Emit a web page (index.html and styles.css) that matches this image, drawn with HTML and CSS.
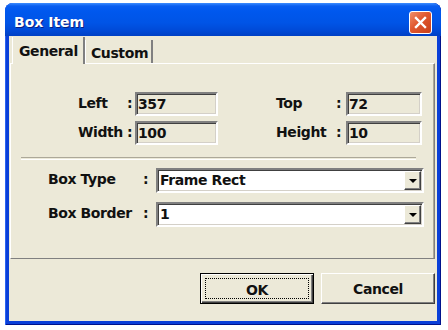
FILE: index.html
```html
<!DOCTYPE html>
<html lang="en">
<head>
  <meta charset="UTF-8" />
  <title>Box Item</title>
  <link rel="stylesheet" href="styles.css">
</head>
<body>
  <div class="window">
    <div class="titlebar">
      <span class="title">Box Item</span>
      <span class="close">
        <svg width="13" height="13" viewBox="0 0 13 13">
          <path d="M2 2 L11 11 M11 2 L2 11" stroke="#fff" stroke-width="2.4" stroke-linecap="square" fill="none"/>
        </svg>
      </span>
    </div>
    <div class="client">
      <div class="tabs">
        <div class="tab active">General</div>
        <div class="tab">Custom</div>
      </div>
      <div class="panel">
        <div class="pos-grid">
          <span class="lbl">Left</span><span class="colon">:</span><span class="edit">357</span>
          <span></span>
          <span class="lbl">Top</span><span class="colon">:</span><span class="edit">72</span>
          <span class="lbl">Width</span><span class="colon">:</span><span class="edit">100</span>
          <span></span>
          <span class="lbl">Height</span><span class="colon">:</span><span class="edit">10</span>
        </div>
        <div class="sep"></div>
        <div class="combo-grid">
          <span class="lbl">Box Type</span><span class="colon">:</span>
          <div class="combo"><span class="value">Frame Rect</span><span class="drop"></span></div>
          <span class="lbl">Box Border</span><span class="colon">:</span>
          <div class="combo"><span class="value">1</span><span class="drop"></span></div>
        </div>
      </div>
      <div class="footer">
        <button class="btn default"><span class="focus">OK</span></button>
        <button class="btn">Cancel</button>
      </div>
    </div>
  </div>
</body>
</html>
```

FILE: styles.css
```css
body {
  margin: 0;
  background: #fff;
  font-family: "DejaVu Sans", Tahoma, sans-serif;
  font-size: 14px;
  letter-spacing: -0.4px;
  font-weight: bold;
  color: #111;
}
.window {
  margin: 3px 0 0 5px;
  width: 436px;
  height: 322px;
  background: #0a3fd8;
  border-radius: 8px 8px 0 0;
  box-sizing: border-box;
  padding: 0 4px 4px 4px;
  display: flex;
  flex-direction: column;
  box-shadow: inset 1px 0 #2a63f0, inset -1px 0 #00138c, inset 0 -1px #00138c;
}
.titlebar {
  height: 33px;
  margin: 0 -4px;
  padding: 0 8px 0 9px;
  border-radius: 8px 8px 0 0;
  background: linear-gradient(to bottom, #3d8dff 0, #0a5ef0 3px, #0058ee 8px, #0054e6 20px, #0049d6 28px, #0040c4 33px);
  display: flex;
  align-items: center;
  justify-content: space-between;
}
.title {
  color: #fff;
  font-size: 14px;
  letter-spacing: 0;
  padding-top: 4px;
  text-shadow: 1px 1px #0a1e80;
}
.close {
  width: 21px;
  height: 21px;
  margin-top: 5px;
  margin-right: 1px;
  border: 1px solid #fff;
  border-radius: 3px;
  background: linear-gradient(135deg, #f08f6a 0, #e0572e 45%, #c8401a 100%);
  display: flex;
  align-items: center;
  justify-content: center;
}
.client {
  flex: 1;
  background: #ece9d8;
  display: flex;
  flex-direction: column;
}
.tabs {
  height: 27px;
  padding-left: 3px;
  display: flex;
  align-items: flex-end;
}
.tab {
  height: 23px;
  width: 68px;
  box-sizing: border-box;
  border-left: 1px solid #fff;
  border-right: 2px solid #808080;
  padding: 5px 0 0 5px;
}
.tab.active {
  height: 27px;
  width: 73px;
  padding: 6px 0 0 6px;
  margin-bottom: -1px;
  background: #ece9d8;
  position: relative;
  z-index: 1;
}
.panel {
  margin-left: 1px;
  width: 425px;
  height: 196px;
  box-sizing: border-box;
  border-top: 1px solid #fff;
  border-left: 1px solid #fff;
  border-right: 1px solid #808080;
  border-bottom: 1px solid #808080;
  box-shadow: inset -1px 0 #aca899;
}
.pos-grid {
  margin: 28px 0 0 67px;
  display: grid;
  grid-template-columns: 49px 8px 83px 58px 60px 10px 76px;
  grid-auto-rows: 24px;
  row-gap: 5px;
  align-items: center;
}
.lbl {
  padding-bottom: 3px;
}
.colon {
  padding-bottom: 3px;
}
.edit {
  height: 24px;
  box-sizing: border-box;
  border: 2px solid;
  border-color: #808080 #fff #fff #808080;
  box-shadow: inset 1px 1px #404040, inset -1px -1px #d4d0c8;
  padding: 2px 0 0 1px;
  background: #ece9d8;
}
.sep {
  margin: 12px 0 0 10px;
  width: 395px;
  height: 1px;
  border-top: 1px solid #aca899;
  border-bottom: 1px solid #fff;
}
.combo-grid {
  margin: 8px 0 0 37px;
  display: grid;
  grid-template-columns: 95px 13px 268px;
  grid-auto-rows: 25px;
  row-gap: 9px;
  align-items: center;
}
.combo {
  height: 25px;
  box-sizing: border-box;
  border: 2px solid;
  border-color: #808080 #fff #fff #808080;
  box-shadow: inset 1px 1px #404040, inset -1px -1px #d4d0c8;
  background: #fff;
  display: flex;
  justify-content: space-between;
  padding: 1px 1px 1px 2px;
}
.value {
  padding-top: 1px;
}
.drop {
  width: 17px;
  box-sizing: border-box;
  background: #ece9d8;
  border: 1px solid;
  border-color: #fff #404040 #404040 #fff;
  box-shadow: inset -1px -1px #808080;
  display: flex;
  align-items: center;
  justify-content: center;
}
.drop::after {
  content: "";
  border-left: 4px solid transparent;
  border-right: 4px solid transparent;
  border-top: 4px solid #000;
}
.footer {
  flex: 1;
  display: flex;
  justify-content: flex-end;
  align-items: flex-start;
  gap: 7px;
  padding: 14px 2px 0 0;
}
.btn {
  width: 114px;
  height: 31px;
  font-family: "DejaVu Sans", Tahoma, sans-serif;
  font-size: 14px;
  letter-spacing: -0.4px;
  font-weight: bold;
  color: #111;
  background: #ece9d8;
  border: 1px solid;
  border-color: #fff #404040 #404040 #fff;
  box-shadow: inset -1px -1px #808080;
  padding: 0;
}
.btn.default {
  border: 1px solid #000;
  box-shadow: inset 1px 1px #fff, inset -1px -1px #404040, inset -2px -2px #808080;
  padding: 4px;
}
.focus {
  display: block;
  height: 100%;
  box-sizing: border-box;
  border: 1px dotted #000;
  padding-top: 3px;
}
```
